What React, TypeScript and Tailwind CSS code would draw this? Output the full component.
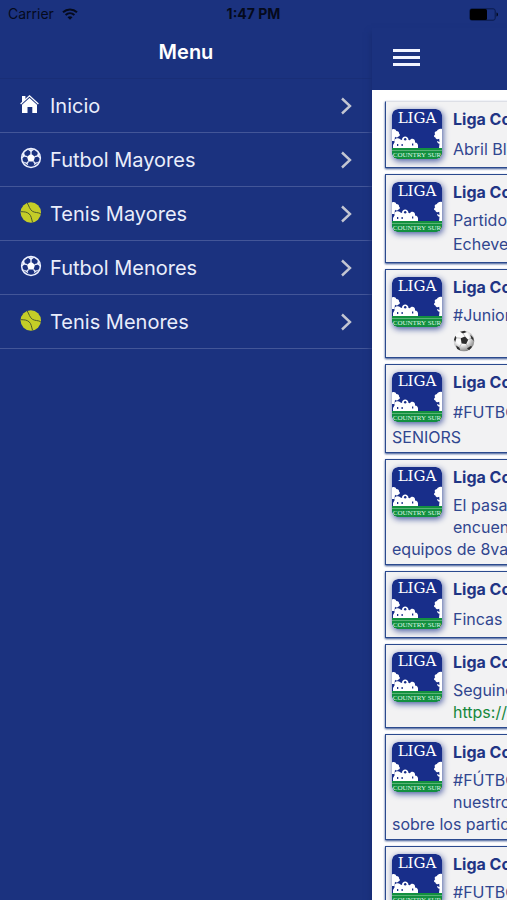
import type { ReactNode } from "react";

type Line = { text: ReactNode; tall?: boolean };

function HomeIcon() {
  return (
    <svg viewBox="0 0 20 20" className="h-5 w-5" fill="#fff" aria-hidden="true">
      <path d="M2 2h3.400v3.400L2 8.500z" />
      <path d="M.6 10 9.500 1.800l8.900 8.200" stroke="#fff" strokeWidth="1.300" fill="none" />
      <path d="M9.500 4 17 10.800V19h-4.700v-6H7.500v6H2v-8.200z" />
    </svg>
  );
}

function FootballIcon() {
  return (
    <svg viewBox="0 0 22 22" className="h-[22px] w-[22px]" aria-hidden="true">
      <circle cx="11" cy="11" r="9.4" fill="#1b327f" stroke="#eef2ff" strokeWidth="1.5" />
      <path d="m11 6.800 4 2.900-1.500 4.700h-5L7 9.700z" fill="#fff" />
      <path d="M11 7V4M15 9.700l2.700-.9M13.500 14.400l1.700 2.300M8.500 14.400l-1.700 2.300M7 9.700l-2.700-.9" stroke="#eef2ff" strokeWidth="1.300" />
      <g fill="#eef2ff">
        <path d="M7.200 2.200h7.600L11 5z" />
        <path d="m18.200 4.700 2.300 7.200-3.600-2.800z" />
        <path d="m19.600 14.200-6.100 4.500 1.500-2.900z" />
        <path d="m2.400 14.200 6.100 4.500L7 15.800z" />
        <path d="m3.800 4.700-2.300 7.200 3.600-2.800z" />
      </g>
    </svg>
  );
}

function TennisIcon() {
  return (
    <svg viewBox="0 0 22 22" className="h-[22px] w-[22px]" fill="none" aria-hidden="true">
      <circle cx="10.800" cy="11.500" r="10.200" fill="#c4cd27" />
      <g stroke="#4d5a2c" strokeWidth="1">
        <path d="M7.200 2C9 4.400 9.500 8.600 12.600 10.400c2.600 1.500 5.400.8 8.100 2.300" />
        <path d="M1 10.700c3 .1 5.700 0 8.200 2.200 2.200 2 2.300 5.200 3.300 8.300" />
      </g>
    </svg>
  );
}

function ChevronIcon() {
  return (
    <svg viewBox="0 0 12 18" className="h-[18px] w-3" fill="none" aria-hidden="true">
      <path d="m2 1.500 8 7.500-8 7.500" stroke="#c3c6d2" strokeWidth="2.400" />
    </svg>
  );
}

function BallEmoji() {
  return (
    <svg viewBox="0 0 22 22" className="inline-block h-[22px] w-[22px] align-middle" role="img" aria-label="⚽">
      <defs>
        <radialGradient id="ball" cx=".4" cy=".35" r=".65">
          <stop offset=".5" stopColor="#fafafa" />
          <stop offset="1" stopColor="#8a8a8a" />
        </radialGradient>
      </defs>
      <circle cx="11" cy="11" r="10.300" fill="url(#ball)" />
      <g fill="#2d2d2d">
        <path d="m7.700 8.200 4.300-1.700 3.200 3.200-2 4.300-4.600-.5z" />
        <path d="M7 1.700 11.500.8l2.300 1.300L10 3.400z" />
        <path d="m17.300 4.600 3 3.400.5 3-2.600-2.800z" />
        <path d="m1 9.500 1.300-3.700 1.200 2-1.400 4.400z" />
        <path d="m3 15.500 3.300 1.900 1 3L4.200 19z" />
        <path d="m14 18.300 3.800-2.300 1.300.8-3 3.400z" />
      </g>
      <path
        d="m7.700 8.200-4.200-.4M12 6.500l-2-3.100M15.200 9.700l3-1.500M13.200 14l2.300 3.300M8.600 13.500l-2.300 3.900"
        stroke="#aaa"
        strokeWidth=".7"
        fill="none"
      />
    </svg>
  );
}

function Logo() {
  return (
    <svg
      viewBox="0 0 50 50"
      className="float-left mt-px mr-[11px] h-[50px] w-[50px] rounded-md shadow-[1px_2px_6px_#4659a0]"
      role="img"
      aria-label="Liga Country Sur"
    >
      <rect width="50" height="50" rx="6" fill="#182e8a" />
      <text x="25" y="14" textAnchor="middle" fontFamily="DejaVu Serif, serif" fontSize="15" fill="#fff">
        LIGA
      </text>
      <g fill="#fff">
        <path d="M0 20.500c2-1 4 0 4.300 1.500 2 0 3 1.200 2.700 2.500 1.400.8 1 2.800-.5 3-1 1.500-3 1-3.500.3L2.500 32H0z" />
        <path d="M1 39v-3l1.500-2.500V31c1-2 4-2.500 6-.5l1.500.5c-.3-4.700 6.600-4.700 6.500 0l1.500.2c1.500-2.400 5-1.400 5 1.300v1c2 0 3 1.500 3 3V39z" />
        <path d="M50 20c-2.500-.6-4.500.5-5 2-2.200.2-3 2-1.800 3.200-1.700 1-1.500 3 .2 3.300.2 1.700 2.500 2.300 3.800 1.300l.3 3.200-2.500-1c0 1.500 1 2.500 2.500 2.800L47 39h3z" />
      </g>
      <g fill="#182e8a">
        <circle cx="13.200" cy="30.300" r="1.200" />
        <path d="M5 35h1.300v2H5zM9.500 35h1.300v2H9.500zM20 34.500h1.300v2H20z" />
      </g>
      <path d="M0 39h50v5a6 6 0 0 1-6 6H6a6 6 0 0 1-6-6z" fill="#12903f" />
      <path d="M0 41.500h50" stroke="#6dbb85" strokeWidth=".8" />
      <text x="25" y="48" textAnchor="middle" fontFamily="Liberation Serif, serif" fontSize="7" fill="#dff5e5">
        COUNTRY SUR
      </text>
    </svg>
  );
}

const menuItems = [
  { label: "Inicio", icon: <HomeIcon /> },
  { label: "Futbol Mayores", icon: <FootballIcon /> },
  { label: "Tenis Mayores", icon: <TennisIcon /> },
  { label: "Futbol Menores", icon: <FootballIcon /> },
  { label: "Tenis Menores", icon: <TennisIcon /> },
];

const posts: Line[][] = [
  [{ text: "Abril Blanco", tall: true }],
  [{ text: "Partidos" }, { text: "Echeverria", tall: true }],
  [{ text: "#Juniors" }, { text: <BallEmoji />, tall: true }],
  [{ text: "#FUTBOL", tall: true }, { text: "SENIORS" }],
  [{ text: "El pasado" }, { text: "encuentro" }, { text: "equipos de 8va" }],
  [{ text: "Fincas", tall: true }],
  [
    { text: "Seguinos" },
    {
      text: (
        <a href="#" className="text-[#16883c]">
          https://
        </a>
      ),
    },
  ],
  [{ text: "#FÚTBOL" }, { text: "nuestros" }, { text: "sobre los partidos" }],
  [{ text: "#FUTBOL" }, { text: "SENIORS" }],
];

function PostCard({ lines }: { lines: Line[] }) {
  return (
    <article className="border border-[#2b4a8e] bg-[#f2f2f3] px-1.5 pt-1.5 pb-1 shadow-[0_1px_2px_#33508f] first:border-t-[#dddfe6]">
      <Logo />
      <h2 className="mb-1.5 text-base leading-[22px] font-bold text-[#1f3585]">Liga Country Sur</h2>
      {lines.map((line, i) => (
        <p key={i} className={line.tall ? "leading-[27px]" : "leading-[22px]"}>
          {line.text}
        </p>
      ))}
    </article>
  );
}

function StatusBar() {
  return (
    <div className="grid h-7 shrink-0 grid-cols-3 items-center px-2 text-sm text-[#050a1c]">
      <div className="flex items-center gap-2">
        <span>Carrier</span>
        <svg viewBox="0 0 16 12" className="h-3 w-4" fill="none" stroke="#050a1c" strokeWidth="2" aria-hidden="true">
          <path d="M1 4.200c4-3.700 10-3.700 14 0M3.600 7c2.600-2.300 6.200-2.300 8.800 0" />
          <path d="M8 11.800 5.500 9.200c1.400-1.300 3.600-1.300 5 0z" fill="#050a1c" stroke="none" />
        </svg>
      </div>
      <span className="text-center font-bold">1:47 PM</span>
      <svg viewBox="0 0 30 13" className="h-[13px] w-[30px] justify-self-end" aria-hidden="true">
        <rect x=".8" y=".8" width="25.400" height="11.400" rx="2" fill="none" stroke="#0a1a4a" />
        <rect x="1" y="1" width="17" height="11" rx="1.500" fill="#000" />
        <path d="M27.500 4.500c2 .6 2 3.400 0 4z" fill="#050a1c" />
      </svg>
    </div>
  );
}

export default function App() {
  return (
    <div className="flex h-screen flex-col overflow-hidden bg-[#1b327f] font-['Inter',sans-serif]">
      <StatusBar />

      <div className="flex min-h-0 flex-1">
        {/* side menu */}
        <nav className="w-[372px] shrink-0">
          <h1 className="flex h-[51px] items-center justify-center border-b border-[#192e77] pb-0.5 text-xl font-semibold text-white">
            Menu
          </h1>
          <ul>
            {menuItems.map((item) => (
              <li key={item.label}>
                <a
                  href="#"
                  className="flex h-[54px] items-center border-b border-[#435698] px-5 text-xl text-[#e9edfb]"
                >
                  <span className="mr-2 flex w-[22px] pb-1">{item.icon}</span>
                  <span className="flex-1">{item.label}</span>
                  <ChevronIcon />
                </a>
              </li>
            ))}
          </ul>
        </nav>

        {/* page pushed aside by the open menu */}
        <main className="flex min-w-0 flex-1 flex-col overflow-hidden shadow-[-1px_4px_6px_#172c72]">
          <header className="flex h-[62px] shrink-0 items-center px-[21px]">
            <button type="button" aria-label="Menu" className="flex w-[27px] flex-col gap-1 pb-1">
              <span className="h-[3px] bg-[#f1f4ff]" />
              <span className="h-[3px] bg-[#f1f4ff]" />
              <span className="h-[3px] bg-[#f1f4ff]" />
            </button>
          </header>
          <div className="min-h-0 w-screen flex-1 bg-white px-[13px] pt-[11px] text-base text-[#30468f]">
            <div className="flex flex-col gap-1.5">
              {posts.map((lines, i) => (
                <PostCard key={i} lines={lines} />
              ))}
            </div>
          </div>
        </main>
      </div>
    </div>
  );
}
